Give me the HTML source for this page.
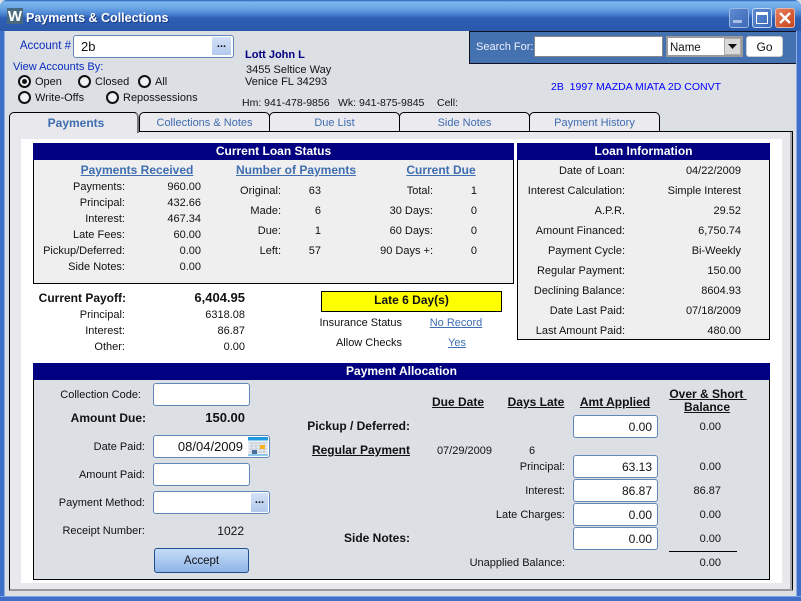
<!DOCTYPE html>
<html><head><meta charset="utf-8"><style>
html,body{margin:0;padding:0;background:#fff}
#w{position:relative;width:801px;height:601px;overflow:hidden;background:#dcdfe4;font:11px/14px "Liberation Sans",sans-serif;color:#111}
#w div,#w span,#w b,#w u{position:absolute;white-space:nowrap}
.r{width:200px;margin-left:-200px;text-align:right}
.c{width:200px;margin-left:-100px;text-align:center}
#w div.r,#w div.c{margin-top:1px}
b,.b{font-weight:bold;font-size:12px}
.hd{background:#000080;color:#fff;height:17px;line-height:16px;text-align:center;font-weight:bold;font-size:12px}
.box{border:1px solid #000;box-sizing:border-box}
.in{background:#fff;border:1px solid #5f87b8;border-radius:3px;box-sizing:border-box}
.lk{color:#3e6db0;text-decoration:underline}
.tab{box-sizing:border-box;height:20px;top:112px;background:#ebeaef;border:1px solid #000;border-bottom:1px solid #000;border-radius:5px 5px 0 0;color:#3e6db0;text-align:center;line-height:20px}
.rad{width:9px;height:9px;border:2px solid #111;border-radius:50%;background:#eef0f2;box-sizing:content-box}
.el{background:linear-gradient(#d5e2f6,#b2c9ee);text-align:center;font-weight:bold;color:#111}
.wb{width:20px;height:20px;top:8px;border-radius:3px;border:1px solid #9db8e2;box-sizing:border-box}
</style></head><body><div id="w">
<div style="left:0;top:0;width:801px;height:601px;border-radius:7px 7px 0 0;box-sizing:border-box;border:5px solid #3f6fc8;border-top:0;background:#dcdfe4"></div>
<div style="left:0;top:596px;width:801px;height:1px;background:#7ba2e2"></div>
<div style="left:0;top:0;width:801px;height:31px;border-radius:7px 7px 0 0;background:linear-gradient(#2a5db8 0,#7ab8ee 2px,#6ba6e6 8px,#4a84d2 14px,#2f5fb4 18px,#2c5cb0 24px,#2a59ab 31px)"></div>
<div style="left:4px;top:31px;width:1px;height:565px;background:#8fb0e6"></div>
<div style="left:796px;top:31px;width:1px;height:565px;background:#8fb0e6"></div>
<div style="left:7px;top:8px;width:16px;height:16px;background:#47687e;overflow:hidden"><span style="left:0;top:0;width:16px;color:#fff;font:bold 15px/17px 'Liberation Sans',sans-serif;text-align:center">W</span></div>
<div style="left:26px;top:10px;color:#fff;font:bold 12.5px/16px 'Liberation Sans',sans-serif;text-shadow:1px 1px 0 #1c3f86">Payments &amp; Collections</div>
<div class="wb" style="left:729px;background:linear-gradient(135deg,#5d8ad0,#3d69b8)"><span style="left:3px;top:11px;width:9px;height:3px;background:#a9c0e6"></span></div>
<div class="wb" style="left:752px;background:linear-gradient(135deg,#5d8ad0,#3d69b8);border-color:#c5d6f0"><span style="left:3px;top:3px;width:12px;height:12px;border:1px solid #fff;border-top:3px solid #fff;box-sizing:border-box"></span></div>
<div class="wb" style="left:775px;background:linear-gradient(135deg,#e8805c,#c8431c);border-color:#e6b8a8"><svg style="position:absolute;left:3px;top:3px" width="12" height="12"><path d="M1 1L11 11M11 1L1 11" stroke="#fff" stroke-width="2.4" fill="none"/></svg></div>

<!-- header area -->
<div class="r" style="left:71px;top:38px;color:#0a2cc0;font-size:11.5px">Account #</div>
<div class="in" style="left:73px;top:35px;width:161px;height:23px"></div>
<div style="left:81px;top:40px;font-size:13px">2b</div>
<div class="el" style="left:212px;top:37px;width:19px;height:18px;line-height:15px">...</div>
<div style="left:13px;top:60px;color:#0a2cc0;font-size:11px">View Accounts By:</div>
<div class="rad" style="left:18px;top:75px"></div><div style="left:22px;top:79px;width:5px;height:5px;border-radius:50%;background:#111"></div>
<div class="rad" style="left:78px;top:75px"></div><div class="rad" style="left:138px;top:75px"></div>
<div class="rad" style="left:18px;top:91px"></div><div class="rad" style="left:106px;top:91px"></div>
<div style="left:35px;top:75px">Open</div><div style="left:95px;top:75px">Closed</div><div style="left:155px;top:75px">All</div>
<div style="left:35px;top:91px">Write-Offs</div><div style="left:123px;top:91px">Repossessions</div>
<b style="left:245px;top:48px;color:#000080;font-size:11px">Lott John L</b>
<div style="left:246px;top:63px">3455 Seltice Way</div>
<div style="left:245px;top:75px">Venice FL 34293</div>
<div style="left:242px;top:96px;font-size:10.5px">Hm: 941-478-9856</div>
<div style="left:338px;top:96px;font-size:10.5px">Wk: 941-875-9845</div>
<div style="left:437px;top:96px;font-size:10.5px">Cell:</div>
<div style="left:469px;top:31px;width:327px;height:33px;background:#4472b0;border-top:1px solid #112;border-left:1px solid #112;border-bottom:1px solid #112;box-sizing:border-box"></div>
<div style="left:476px;top:40px;color:#eef;font-size:11px">Search For:</div>
<div style="left:534px;top:36px;width:129px;height:21px;background:#fff;border:1px solid #888;box-sizing:border-box"></div>
<div style="left:666px;top:36px;width:77px;height:21px;background:#fff;border:2px solid #999;box-sizing:border-box"></div>
<div style="left:670px;top:41px;font-size:11.5px">Name</div>
<div style="left:724px;top:38px;width:17px;height:17px;background:#d8d8d8;border:1px solid #aaa;box-sizing:border-box"></div>
<svg style="position:absolute;left:727px;top:44px" width="11" height="6"><path d="M1 0H10L5.5 5Z" fill="#111"/></svg>
<div class="in" style="left:746px;top:36px;width:37px;height:21px;border-color:#ccc;text-align:center;line-height:21px;font-size:12px">Go</div>
<div style="left:551px;top:80px;color:#0000ff;font-size:10.5px">2B&nbsp;&nbsp;1997 MAZDA MIATA 2D CONVT</div>

<!-- tab panel -->
<div style="left:9px;top:131px;width:784px;height:460px;background:#e9e8ed;border-left:1px solid #000;border-top:1px solid #000;border-right:1px solid #000;border-bottom:2px solid #999;box-sizing:border-box"></div>
<div style="left:790px;top:132px;width:2px;height:458px;background:#aaa"></div>
<div style="left:21px;top:139px;width:761px;height:444px;background:#fff"></div>
<div class="tab" style="left:139px;width:131px">Collections &amp; Notes</div>
<div class="tab" style="left:269px;width:131px">Due List</div>
<div class="tab" style="left:399px;width:131px">Side Notes</div>
<div class="tab" style="left:529px;width:131px">Payment History</div>
<div style="left:9px;top:112px;width:130px;height:21px;background:#e9e8ed;border:1px solid #000;border-bottom:0;border-right:2px solid #777;border-radius:5px 5px 0 0;box-sizing:border-box"></div>
<b class="c" style="left:76px;top:116px;color:#3e6db0">Payments</b>

<!-- current loan status -->
<div class="box" style="left:33px;top:143px;width:481px;height:141px;background:#efefef"></div>
<div class="hd" style="left:33px;top:143px;width:481px">Current Loan Status</div>
<b class="c lk" style="left:137px;top:163px">Payments Received</b>
<b class="c lk" style="left:296px;top:163px">Number of Payments</b>
<b class="c lk" style="left:441px;top:163px">Current Due</b>
<div class="r" style="left:125px;top:179px">Payments:</div><div class="r" style="left:201px;top:179px">960.00</div>
<div class="r" style="left:125px;top:195px">Principal:</div><div class="r" style="left:201px;top:195px">432.66</div>
<div class="r" style="left:125px;top:211px">Interest:</div><div class="r" style="left:201px;top:211px">467.34</div>
<div class="r" style="left:125px;top:227px">Late Fees:</div><div class="r" style="left:201px;top:227px">60.00</div>
<div class="r" style="left:125px;top:243px">Pickup/Deferred:</div><div class="r" style="left:201px;top:243px">0.00</div>
<div class="r" style="left:125px;top:259px">Side Notes:</div><div class="r" style="left:201px;top:259px">0.00</div>
<div class="r" style="left:281px;top:183px">Original:</div><div class="r" style="left:321px;top:183px">63</div>
<div class="r" style="left:281px;top:203px">Made:</div><div class="r" style="left:321px;top:203px">6</div>
<div class="r" style="left:281px;top:223px">Due:</div><div class="r" style="left:321px;top:223px">1</div>
<div class="r" style="left:281px;top:243px">Left:</div><div class="r" style="left:321px;top:243px">57</div>
<div class="r" style="left:433px;top:183px">Total:</div><div class="r" style="left:477px;top:183px">1</div>
<div class="r" style="left:433px;top:203px">30 Days:</div><div class="r" style="left:477px;top:203px">0</div>
<div class="r" style="left:433px;top:223px">60 Days:</div><div class="r" style="left:477px;top:223px">0</div>
<div class="r" style="left:433px;top:243px">90 Days +:</div><div class="r" style="left:477px;top:243px">0</div>

<!-- payoff -->
<b class="r" style="left:126px;top:291px">Current Payoff:</b>
<b class="r" style="left:245px;top:291px;font-size:13px">6,404.95</b>
<div class="r" style="left:125px;top:307px">Principal:</div><div class="r" style="left:245px;top:307px">6318.08</div>
<div class="r" style="left:125px;top:323px">Interest:</div><div class="r" style="left:245px;top:323px">86.87</div>
<div class="r" style="left:125px;top:339px">Other:</div><div class="r" style="left:245px;top:339px">0.00</div>
<div class="box" style="left:321px;top:291px;width:181px;height:21px;background:#ffff00;text-align:center;font-weight:bold;font-size:12px;line-height:17px">Late 6 Day(s)</div>
<div class="r" style="left:402px;top:315px">Insurance Status</div>
<div class="c lk" style="left:456px;top:315px">No Record</div>
<div class="r" style="left:402px;top:335px">Allow Checks</div>
<div class="c lk" style="left:457px;top:335px">Yes</div>

<!-- loan info -->
<div class="box" style="left:517px;top:143px;width:253px;height:197px;background:#efefef"></div>
<div class="hd" style="left:517px;top:143px;width:253px">Loan Information</div>
<div class="r" style="left:625px;top:163px">Date of Loan:</div><div class="r" style="left:741px;top:163px">04/22/2009</div>
<div class="r" style="left:625px;top:183px">Interest Calculation:</div><div class="r" style="left:741px;top:183px">Simple Interest</div>
<div class="r" style="left:625px;top:203px">A.P.R.</div><div class="r" style="left:741px;top:203px">29.52</div>
<div class="r" style="left:625px;top:223px">Amount Financed:</div><div class="r" style="left:741px;top:223px">6,750.74</div>
<div class="r" style="left:625px;top:243px">Payment Cycle:</div><div class="r" style="left:741px;top:243px">Bi-Weekly</div>
<div class="r" style="left:625px;top:263px">Regular Payment:</div><div class="r" style="left:741px;top:263px">150.00</div>
<div class="r" style="left:625px;top:283px">Declining Balance:</div><div class="r" style="left:741px;top:283px">8604.93</div>
<div class="r" style="left:625px;top:303px">Date Last Paid:</div><div class="r" style="left:741px;top:303px">07/18/2009</div>
<div class="r" style="left:625px;top:323px">Last Amount Paid:</div><div class="r" style="left:741px;top:323px">480.00</div>

<!-- payment allocation -->
<div class="box" style="left:33px;top:363px;width:737px;height:217px;background:#dcdfe4"></div>
<div class="hd" style="left:33px;top:363px;width:737px">Payment Allocation</div>
<div class="r" style="left:141px;top:387px">Collection Code:</div><div class="in" style="left:153px;top:383px;width:97px;height:23px"></div>
<b class="r" style="left:146px;top:411px">Amount Due:</b><b class="r" style="left:245px;top:411px;font-size:13px">150.00</b>
<div class="r" style="left:145px;top:439px">Date Paid:</div><div class="in" style="left:153px;top:435px;width:117px;height:23px"></div>
<div class="r" style="left:243px;top:439px;font-size:13px">08/04/2009</div>
<svg style="position:absolute;left:248px;top:437px" width="20" height="19"><rect width="20" height="19" fill="#e8eef4"/><rect width="20" height="3" y="0" fill="#1f9ae0"/><rect width="20" height="1" y="3" fill="#8fd0f0"/><path d="M1 6H19M1 9H19M1 12H19M1 15H19M4 5V16M8 5V16M12 5V16M16 5V16" stroke="#c8ccd4" fill="none"/><rect x="12" y="8" width="5" height="4" fill="#f6b21c"/><rect x="4" y="13" width="5" height="4" fill="#48709c"/><rect y="17" width="20" height="2" fill="#8fc8e8"/></svg>
<div class="r" style="left:145px;top:467px">Amount Paid:</div><div class="in" style="left:153px;top:463px;width:97px;height:23px"></div>
<div class="r" style="left:145px;top:495px">Payment Method:</div><div class="in" style="left:153px;top:491px;width:117px;height:23px"></div>
<div class="el" style="left:251px;top:493px;width:17px;height:19px;line-height:15px">...</div>
<div class="r" style="left:145px;top:523px">Receipt Number:</div><div class="r" style="left:244px;top:523px;font-size:12px">1022</div>
<div style="left:154px;top:548px;width:95px;height:25px;box-sizing:border-box;border:1px solid #1f4f8c;border-radius:3px;background:linear-gradient(#c6dcf8,#8fb5e6);text-align:center;font-size:11.5px;line-height:25px">Accept</div>

<b class="r" style="left:410px;top:419px">Pickup / Deferred:</b>
<b class="r" style="left:410px;top:443px;text-decoration:underline">Regular Payment</b>
<b class="r" style="left:410px;top:531px">Side Notes:</b>
<b class="c" style="left:458px;top:395px;text-decoration:underline">Due Date</b>
<b class="c" style="left:536px;top:395px;text-decoration:underline">Days Late</b>
<b class="c" style="left:615px;top:395px;text-decoration:underline">Amt Applied</b>
<b class="c" style="left:708px;top:387px;text-decoration:underline">Over &amp; Short&nbsp;</b>
<b class="c" style="left:707px;top:400px;text-decoration:underline">Balance</b>
<div class="r" style="left:492px;top:443px">07/29/2009</div>
<div class="c" style="left:532px;top:443px">6</div>
<div class="r" style="left:565px;top:459px">Principal:</div>
<div class="r" style="left:565px;top:483px">Interest:</div>
<div class="r" style="left:565px;top:507px">Late Charges:</div>
<div class="r" style="left:565px;top:555px">Unapplied Balance:</div>
<div class="in" style="left:573px;top:415px;width:85px;height:23px"></div>
<div class="in" style="left:573px;top:455px;width:85px;height:23px"></div>
<div class="in" style="left:573px;top:479px;width:85px;height:23px"></div>
<div class="in" style="left:573px;top:503px;width:85px;height:23px"></div>
<div class="in" style="left:573px;top:527px;width:85px;height:23px"></div>
<div class="r" style="left:652px;top:419px;font-size:12px">0.00</div>
<div class="r" style="left:652px;top:459px;font-size:12px">63.13</div>
<div class="r" style="left:652px;top:483px;font-size:12px">86.87</div>
<div class="r" style="left:652px;top:507px;font-size:12px">0.00</div>
<div class="r" style="left:652px;top:531px;font-size:12px">0.00</div>
<div class="r" style="left:721px;top:419px">0.00</div>
<div class="r" style="left:721px;top:459px">0.00</div>
<div class="r" style="left:721px;top:483px">86.87</div>
<div class="r" style="left:721px;top:507px">0.00</div>
<div class="r" style="left:721px;top:531px">0.00</div>
<div style="left:669px;top:551px;width:68px;height:1px;background:#000"></div>
<div class="r" style="left:721px;top:555px">0.00</div>
</div></body></html>
